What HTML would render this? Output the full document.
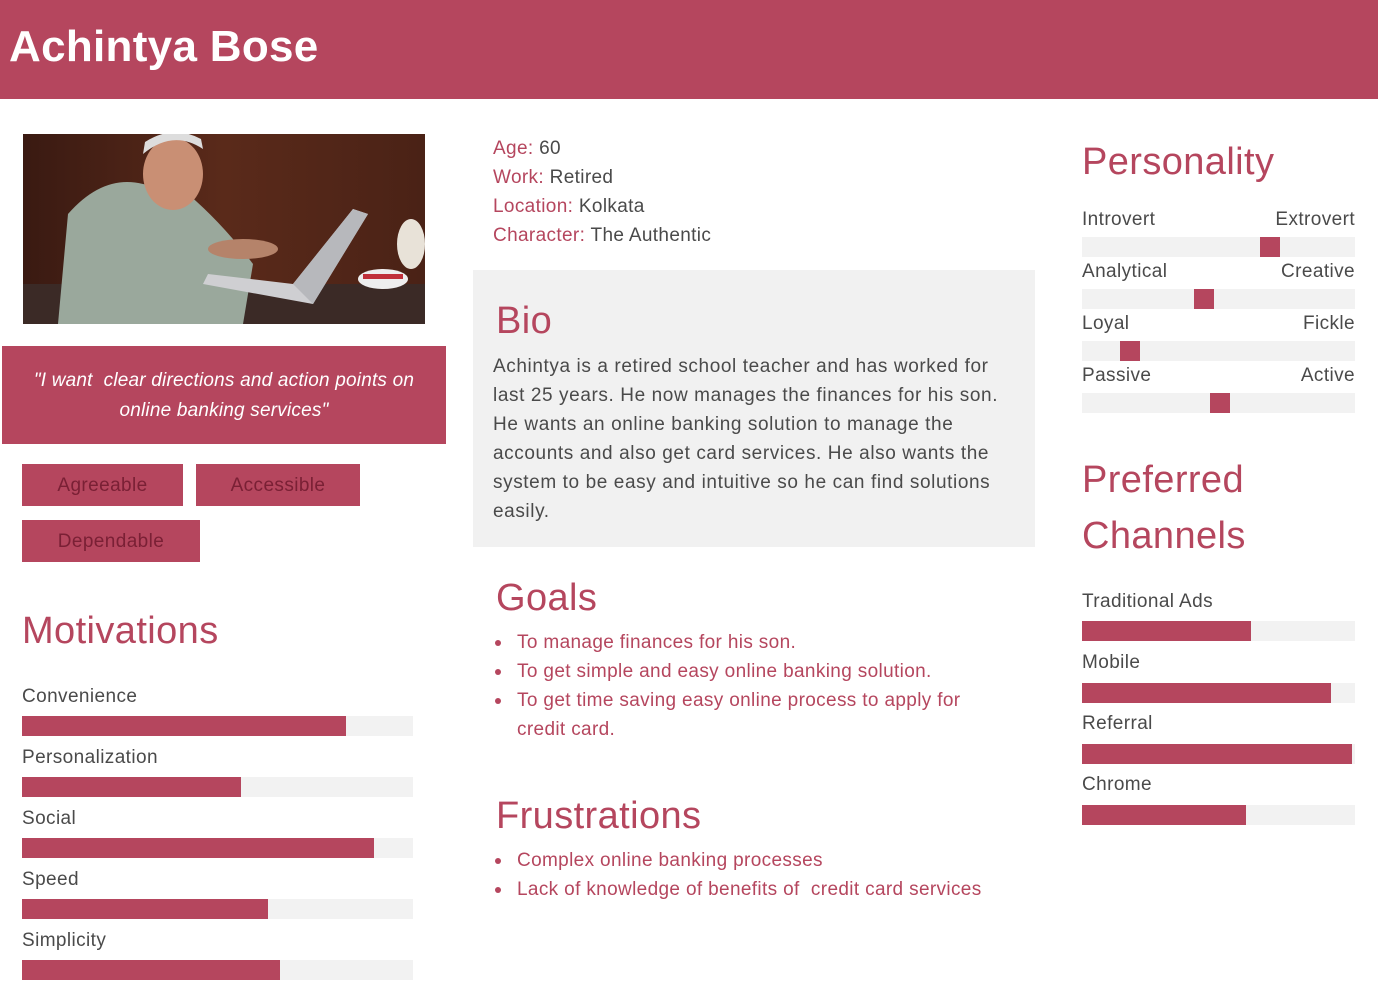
<!DOCTYPE html><html><head><style>
*{margin:0;padding:0;box-sizing:border-box}
body{width:1378px;height:994px;background:#fff;position:relative;overflow:hidden;font-family:"Liberation Sans",sans-serif;color:#444}
.a{position:absolute}
.c{color:#b5465e}
.h{position:absolute;background:#b5465e;left:0;top:0;width:1378px;height:99px}
.h span{position:absolute;left:9px;top:22px;font-size:44px;font-weight:bold;color:#fff;letter-spacing:0.3px}
.t{font-size:19px;line-height:29px;color:#4a4a4a;letter-spacing:0.35px}
.bar{position:absolute;background:#f2f2f2;height:20px}
.bar i{position:absolute;left:0;top:0;height:20px;background:#b5465e}
.tag{position:absolute;background:#b5465e;color:#7a2035;font-size:19px;height:42px;line-height:44px;text-align:center;letter-spacing:0.4px}
.hd{position:absolute;color:#b5465e;font-size:38px;font-weight:normal;letter-spacing:0.4px}
.lbl{position:absolute;font-size:19px;color:#4a4a4a;letter-spacing:0.4px}
.mk{position:absolute;width:20px;height:20px;background:#b5465e}
ul{list-style:none}
li{position:relative;padding-left:24px}
li:before{content:"";position:absolute;left:2px;top:12px;width:6px;height:6px;border-radius:50%;background:#b5465e}
</style></head><body>
<div class="h"><span>Achintya Bose</span></div>
<svg class="a" style="left:23px;top:134px" width="402" height="190">
<defs><linearGradient id="w" x1="0" x2="1"><stop offset="0" stop-color="#3a1a12"/><stop offset=".5" stop-color="#5a2a1a"/><stop offset="1" stop-color="#4a2216"/></linearGradient></defs>
<rect width="402" height="190" fill="url(#w)"/>
<rect x="0" y="150" width="402" height="40" fill="#3b2a26"/>
<path d="M35 190 L45 80 Q80 40 120 50 L165 60 Q200 90 230 130 L220 190Z" fill="#9aa89c"/>
<ellipse cx="150" cy="40" rx="30" ry="36" fill="#c98f74"/>
<path d="M120 20 Q150 -5 180 15 L178 5 Q150 -10 122 8Z" fill="#ddd"/>
<path d="M180 150 L290 170 L345 80 L330 75 L270 150 L185 140Z" fill="#cfcfd2"/>
<path d="M270 150 L330 75 L345 80 L290 170Z" fill="#b7b8bc"/>
<ellipse cx="220" cy="115" rx="35" ry="10" fill="#b5836a"/>
<ellipse cx="360" cy="145" rx="25" ry="10" fill="#eee"/>
<path d="M340 140 h40 v5 h-40z" fill="#c0303a"/>
<ellipse cx="388" cy="110" rx="14" ry="25" fill="#e8e2d8"/>
</svg>
<div class="a" style="left:2px;top:346px;width:444px;height:98px;background:#b5465e;color:#fff;font-style:italic;font-size:19px;line-height:30px;text-align:center;padding-top:20px;letter-spacing:0.2px">"I want &nbsp;clear directions and action points on<br>online banking services"</div>
<div class="tag" style="left:22px;top:464px;width:161px">Agreeable</div>
<div class="tag" style="left:196px;top:464px;width:164px">Accessible</div>
<div class="tag" style="left:22px;top:520px;width:178px">Dependable</div>
<div class="hd" style="left:22px;top:610px">Motivations</div>
<div class="lbl" style="left:22px;top:686px">Convenience</div><div class="bar" style="left:22px;top:716px;width:391px"><i style="width:324px"></i></div>
<div class="lbl" style="left:22px;top:747px">Personalization</div><div class="bar" style="left:22px;top:777px;width:391px"><i style="width:219px"></i></div>
<div class="lbl" style="left:22px;top:808px">Social</div><div class="bar" style="left:22px;top:838px;width:391px"><i style="width:352px"></i></div>
<div class="lbl" style="left:22px;top:869px">Speed</div><div class="bar" style="left:22px;top:899px;width:391px"><i style="width:246px"></i></div>
<div class="lbl" style="left:22px;top:930px">Simplicity</div><div class="bar" style="left:22px;top:960px;width:391px"><i style="width:258px"></i></div>

<div class="a t" style="left:493px;top:134px"><span class="c">Age:</span> 60<br><span class="c">Work:</span> Retired<br><span class="c">Location:</span> Kolkata<br><span class="c">Character:</span> The Authentic</div>
<div class="a" style="left:473px;top:270px;width:562px;height:277px;background:#f1f1f1"></div>
<div class="hd" style="left:496px;top:300px">Bio</div>
<div class="a t" style="left:493px;top:352px;width:540px;white-space:nowrap;letter-spacing:0.6px">Achintya is a retired school teacher and has worked for<br>last 25 years. He now manages the finances for his son.<br>He wants an online banking solution to manage the<br>accounts and also get card services. He also wants the<br>system to be easy and intuitive so he can find solutions<br>easily.</div>
<div class="hd" style="left:496px;top:577px">Goals</div>
<ul class="a t" style="left:493px;top:628px;width:495px;color:#b5465e"><li>To manage finances for his son.</li><li>To get simple and easy online banking solution.</li><li>To get time saving easy online process to apply for credit card.</li></ul>
<div class="hd" style="left:496px;top:795px">Frustrations</div>
<ul class="a t" style="left:493px;top:846px;width:540px;color:#b5465e"><li>Complex online banking processes</li><li>Lack of knowledge of benefits of &nbsp;credit card services</li></ul>

<div class="hd" style="left:1082px;top:141px">Personality</div>
<div class="lbl" style="left:1082px;top:209px">Introvert</div><div class="lbl" style="right:23px;top:209px">Extrovert</div>
<div class="bar" style="left:1082px;top:237px;width:273px"></div><div class="mk" style="left:1260px;top:237px"></div>
<div class="lbl" style="left:1082px;top:261px">Analytical</div><div class="lbl" style="right:23px;top:261px">Creative</div>
<div class="bar" style="left:1082px;top:289px;width:273px"></div><div class="mk" style="left:1194px;top:289px"></div>
<div class="lbl" style="left:1082px;top:313px">Loyal</div><div class="lbl" style="right:23px;top:313px">Fickle</div>
<div class="bar" style="left:1082px;top:341px;width:273px"></div><div class="mk" style="left:1120px;top:341px"></div>
<div class="lbl" style="left:1082px;top:365px">Passive</div><div class="lbl" style="right:23px;top:365px">Active</div>
<div class="bar" style="left:1082px;top:393px;width:273px"></div><div class="mk" style="left:1210px;top:393px"></div>
<div class="hd" style="left:1082px;top:452px;line-height:56px">Preferred<br>Channels</div>
<div class="lbl" style="left:1082px;top:591px">Traditional Ads</div><div class="bar" style="left:1082px;top:621px;width:273px"><i style="width:169px"></i></div>
<div class="lbl" style="left:1082px;top:652px">Mobile</div><div class="bar" style="left:1082px;top:683px;width:273px"><i style="width:249px"></i></div>
<div class="lbl" style="left:1082px;top:713px">Referral</div><div class="bar" style="left:1082px;top:744px;width:273px"><i style="width:270px"></i></div>
<div class="lbl" style="left:1082px;top:774px">Chrome</div><div class="bar" style="left:1082px;top:805px;width:273px"><i style="width:164px"></i></div>
</body></html>
